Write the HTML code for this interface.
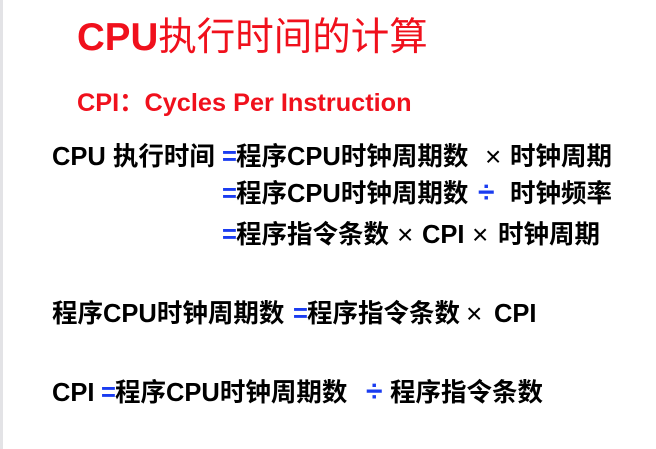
<!DOCTYPE html>
<html><head><meta charset="utf-8"><style>
html,body{margin:0;padding:0;width:656px;height:449px;background:#fff;overflow:hidden;position:relative}
.bar{position:absolute;left:0;top:0;width:3px;height:449px;background:#e3e3e6}
span{position:absolute;white-space:nowrap;font-family:"Liberation Sans","Noto Sans CJK SC",sans-serif;font-weight:bold;font-size:25.5px;line-height:26px;color:#000}
.r{color:#f0101c}
.b{color:#1a3cf0}
.x{font-weight:normal;font-size:28px}
.d{font-weight:bold;font-size:30px}
</style></head><body>
<div class="bar"></div>
<span class="r" style="left:77px;top:18px;font-size:38.5px;line-height:40px">CPU<b style="font-weight:normal">执行时间的计算</b></span>
<span class="r" style="left:77px;top:90px;font-size:25.3px;line-height:26px">CPI：Cycles Per Instruction</span>

<span style="left:52px;top:144px">CPU 执行时间</span>
<span class="b" style="left:222px;top:144px">=</span>
<span style="left:236px;top:144px">程序CPU时钟周期数</span>
<span class="x" style="left:485px;top:144px">×</span>
<span style="left:510px;top:144px">时钟周期</span>

<span class="b" style="left:222px;top:181px">=</span>
<span style="left:236px;top:181px">程序CPU时钟周期数</span>
<span class="b d" style="left:478px;top:180px">÷</span>
<span style="left:510px;top:181px">时钟频率</span>

<span class="b" style="left:222px;top:222px">=</span>
<span style="left:236px;top:222px">程序指令条数</span>
<span class="x" style="left:397px;top:222px">×</span>
<span style="left:422px;top:222px">CPI</span>
<span class="x" style="left:472px;top:222px">×</span>
<span style="left:498px;top:222px">时钟周期</span>

<span style="left:52px;top:301px">程序CPU时钟周期数</span>
<span class="b" style="left:293px;top:301px">=</span>
<span style="left:307px;top:301px">程序指令条数</span>
<span class="x" style="left:466px;top:301px">×</span>
<span style="left:494px;top:301px">CPI</span>

<span style="left:52px;top:380px">CPI</span>
<span class="b" style="left:101px;top:380px">=</span>
<span style="left:115px;top:380px">程序CPU时钟周期数</span>
<span class="b d" style="left:366px;top:379px">÷</span>
<span style="left:390px;top:380px">程序指令条数</span>
</body></html>
